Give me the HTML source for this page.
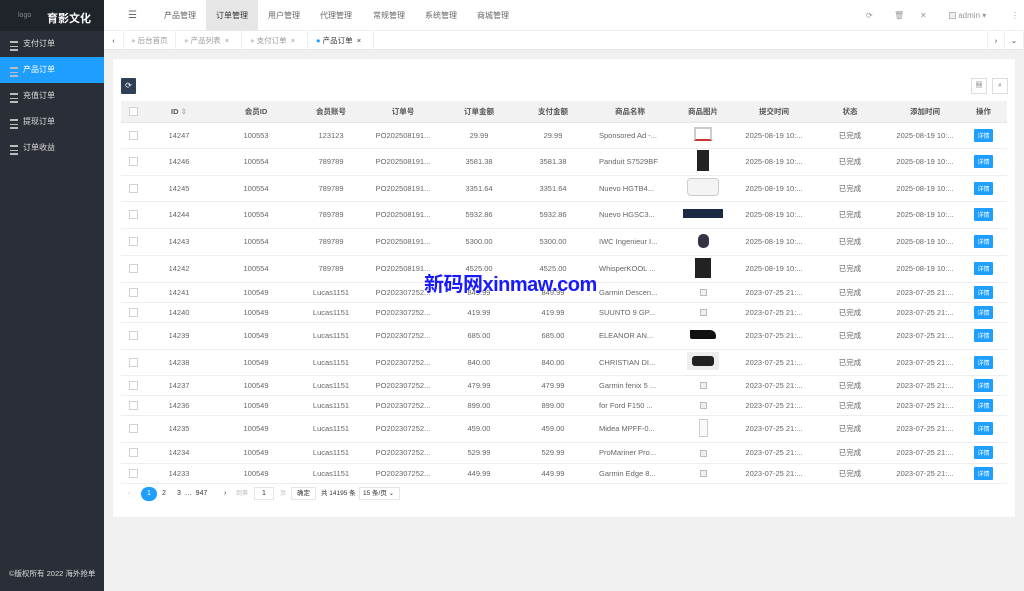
<!DOCTYPE html>
<html><head><meta charset="utf-8"><style>
*{margin:0;padding:0;box-sizing:border-box}
body{width:1024px;height:591px;overflow:hidden;background:#f0f0f0;font-family:"Liberation Sans","Noto Sans CJK SC",sans-serif;font-size:8px;color:#666;position:relative}
.side{position:absolute;left:0;top:0;width:104px;height:591px;background:#2a2f37}
.logo{height:31px;background:#1f242b;color:#fff;font-size:11px;font-weight:bold;padding:10px 0 0 47px;position:relative}
.logo small{position:absolute;left:18px;top:12px;font-size:7px;color:#888;font-weight:normal}
.mi{height:26px;line-height:26px;color:#ddd;padding-left:23px;position:relative;font-size:8px}
.mi:before{content:"";position:absolute;left:10px;top:10px;width:8px;height:6px;border-top:2px solid #bbb;border-bottom:2px solid #bbb;background:linear-gradient(#bbb,#bbb) center/100% 1px no-repeat}
.mi.on{background:#1e9fff;color:#fff}
.copy{position:absolute;bottom:12px;left:9px;color:#ddd;font-size:7.5px}
.top{position:absolute;left:104px;top:0;right:0;height:31px;background:#fff;border-bottom:1px solid #eee}
.nav{position:absolute;top:0;height:31px;line-height:31px;font-size:8px;color:#666}
.tabs{position:absolute;left:104px;top:31px;right:0;height:19px;background:#fff;border-bottom:1px solid #e6e6e6}
.tab{position:absolute;top:0;height:19px;line-height:19px;font-size:7.5px;color:#999;border-right:1px solid #eee}
.card{position:absolute;left:113px;top:59px;width:902px;height:458px;background:#fff}
table{position:absolute;left:121px;top:101px;width:886px;border-collapse:collapse;table-layout:fixed}
th{background:#f2f2f2;height:21px;font-weight:bold;color:#555;font-size:7.5px;border-bottom:1px solid #e6e6e6}
td{text-align:center;border-bottom:1px solid #eee;font-size:7.5px;color:#666;white-space:nowrap;overflow:hidden}
td.l{text-align:left;padding-left:7px}
.cb{display:inline-block;width:9px;height:9px;border:1px solid #d2d2d2;background:#fff;vertical-align:middle}
.btn{display:inline-block;background:#1e9fff;color:#fff;font-size:6px;padding:2px 3px;border-radius:1px}
.bi{display:inline-block;width:7px;height:7px;border:1px solid #bbb;background:#eaf4ea;vertical-align:middle}
.pg{position:absolute;top:487px;font-size:7px;color:#333}
</style></head><body>
<div class="side">
 <div class="logo"><small>logo</small>育影文化</div>
 <div class="mi">支付订单</div>
 <div class="mi on">产品订单</div>
 <div class="mi">充值订单</div>
 <div class="mi">提现订单</div>
 <div class="mi">订单收益</div>
 <div class="copy">©版权所有 2022 海外抢单</div>
</div>
<div class="top">
 <div class="nav" style="left:24px;font-size:10px">☰</div>
 <div class="nav" style="left:60px">产品管理</div>
 <div class="nav" style="left:102px;width:52px;background:#e6e6e6;text-align:center;color:#333">订单管理</div>
 <div class="nav" style="left:164px">用户管理</div>
 <div class="nav" style="left:216px">代理管理</div>
 <div class="nav" style="left:269px">常规管理</div>
 <div class="nav" style="left:321px">系统管理</div>
 <div class="nav" style="left:373px">商城管理</div>
 <div class="nav" style="left:762px;color:#999">⟳</div>
 <div class="nav" style="left:790px;color:#999">🗑</div>
 <div class="nav" style="left:816px;color:#999">✕</div>
 <div class="nav" style="left:845px"><span class="bi"></span> <span style="color:#999">admin ▾</span></div>
 <div class="nav" style="left:907px;color:#999">⋮</div>
</div>
<div class="tabs">
 <div class="tab" style="left:0;width:20px;text-align:center;color:#333">‹</div>
 <div class="tab" style="left:20px;width:52px;padding-left:7px"><span style="color:#ccc">●</span> 后台首页</div>
 <div class="tab" style="left:72px;width:66px;padding-left:8px"><span style="color:#ccc">●</span> 产品列表 &nbsp;×</div>
 <div class="tab" style="left:138px;width:66px;padding-left:8px"><span style="color:#ccc">●</span> 支付订单 &nbsp;×</div>
 <div class="tab" style="left:204px;width:66px;padding-left:8px;color:#333"><span style="color:#1e9fff">●</span> 产品订单 &nbsp;×</div>
 <div class="tab" style="left:883px;width:18px;border-left:1px solid #eee;text-align:center;color:#333">›</div>
 <div class="tab" style="left:901px;width:19px;text-align:center;color:#333">⌄</div>
</div>
<div class="card"></div>
<div style="position:absolute;left:121px;top:78px;width:15px;height:16px;background:#2f4056;color:#fff;font-size:8px;text-align:center;line-height:16px;border-radius:1px">⟳</div>
<div style="position:absolute;left:971px;top:78px;width:16px;height:16px;border:1px solid #ddd;font-size:7px;text-align:center;line-height:14px">▦</div>
<div style="position:absolute;left:992px;top:78px;width:16px;height:16px;border:1px solid #ddd;font-size:7px;text-align:center;line-height:14px">⌕</div>
<table>
<colgroup><col style="width:25px"><col style="width:66px"><col style="width:88px"><col style="width:62px"><col style="width:82px"><col style="width:70px"><col style="width:78px"><col style="width:76px"><col style="width:70px"><col style="width:72px"><col style="width:80px"><col style="width:70px"><col style="width:47px"></colgroup>
<tr><th><span class="cb"></span></th><th>ID <span style="color:#bbb">⇕</span></th><th>会员ID</th><th>会员账号</th><th>订单号</th><th>订单金额</th><th>支付金额</th><th>商品名称</th><th>商品图片</th><th>提交时间</th><th>状态</th><th>添加时间</th><th>操作</th></tr>
<tr style="height:26px"><td><span class="cb"></span></td><td>14247</td><td>100553</td><td>123123</td><td>PO202508191...</td><td>29.99</td><td>29.99</td><td class="l">Sponsored Ad -...</td><td><span style="display:inline-block;width:18px;height:14px;border:2px solid #ccc;border-bottom-color:#c33"></span></td><td>2025-08-19 10:...</td><td>已完成</td><td>2025-08-19 10:...</td><td><span class="btn">详情</span></td></tr>
<tr style="height:27px"><td><span class="cb"></span></td><td>14246</td><td>100554</td><td>789789</td><td>PO202508191...</td><td>3581.38</td><td>3581.38</td><td class="l">Panduit S7529BF</td><td><span style="display:inline-block;width:12px;height:21px;background:#222"></span></td><td>2025-08-19 10:...</td><td>已完成</td><td>2025-08-19 10:...</td><td><span class="btn">详情</span></td></tr>
<tr style="height:26px"><td><span class="cb"></span></td><td>14245</td><td>100554</td><td>789789</td><td>PO202508191...</td><td>3351.64</td><td>3351.64</td><td class="l">Nuevo HGTB4...</td><td><span style="display:inline-block;width:32px;height:18px;border:1px solid #ccc;border-radius:4px;background:#f4f4f4"></span></td><td>2025-08-19 10:...</td><td>已完成</td><td>2025-08-19 10:...</td><td><span class="btn">详情</span></td></tr>
<tr style="height:27px"><td><span class="cb"></span></td><td>14244</td><td>100554</td><td>789789</td><td>PO202508191...</td><td>5932.86</td><td>5932.86</td><td class="l">Nuevo HGSC3...</td><td><span style="display:inline-block;width:40px;height:9px;background:#1a2a44"></span></td><td>2025-08-19 10:...</td><td>已完成</td><td>2025-08-19 10:...</td><td><span class="btn">详情</span></td></tr>
<tr style="height:27px"><td><span class="cb"></span></td><td>14243</td><td>100554</td><td>789789</td><td>PO202508191...</td><td>5300.00</td><td>5300.00</td><td class="l">IWC Ingenieur I...</td><td><span style="display:inline-block;width:11px;height:14px;border-radius:5px;background:#334"></span></td><td>2025-08-19 10:...</td><td>已完成</td><td>2025-08-19 10:...</td><td><span class="btn">详情</span></td></tr>
<tr style="height:27px"><td><span class="cb"></span></td><td>14242</td><td>100554</td><td>789789</td><td>PO202508191...</td><td>4525.00</td><td>4525.00</td><td class="l">WhisperKOOL ...</td><td><span style="display:inline-block;width:16px;height:20px;background:#222"></span></td><td>2025-08-19 10:...</td><td>已完成</td><td>2025-08-19 10:...</td><td><span class="btn">详情</span></td></tr>
<tr style="height:20px"><td><span class="cb"></span></td><td>14241</td><td>100549</td><td>Lucas1151</td><td>PO202307252...</td><td>849.99</td><td>849.99</td><td class="l">Garmin Descen...</td><td><span class="bi"></span></td><td>2023-07-25 21:...</td><td>已完成</td><td>2023-07-25 21:...</td><td><span class="btn">详情</span></td></tr>
<tr style="height:20px"><td><span class="cb"></span></td><td>14240</td><td>100549</td><td>Lucas1151</td><td>PO202307252...</td><td>419.99</td><td>419.99</td><td class="l">SUUNTO 9 GP...</td><td><span class="bi"></span></td><td>2023-07-25 21:...</td><td>已完成</td><td>2023-07-25 21:...</td><td><span class="btn">详情</span></td></tr>
<tr style="height:27px"><td><span class="cb"></span></td><td>14239</td><td>100549</td><td>Lucas1151</td><td>PO202307252...</td><td>685.00</td><td>685.00</td><td class="l">ELEANOR AN...</td><td><span style="display:inline-block;width:26px;height:9px;background:#111;border-radius:0 6px 2px 2px"></span></td><td>2023-07-25 21:...</td><td>已完成</td><td>2023-07-25 21:...</td><td><span class="btn">详情</span></td></tr>
<tr style="height:26px"><td><span class="cb"></span></td><td>14238</td><td>100549</td><td>Lucas1151</td><td>PO202307252...</td><td>840.00</td><td>840.00</td><td class="l">CHRISTIAN DI...</td><td><span style="display:inline-block;width:32px;height:18px;background:#eee;padding:4px 5px"><span style="display:block;height:10px;background:#222;border-radius:3px"></span></span></td><td>2023-07-25 21:...</td><td>已完成</td><td>2023-07-25 21:...</td><td><span class="btn">详情</span></td></tr>
<tr style="height:20px"><td><span class="cb"></span></td><td>14237</td><td>100549</td><td>Lucas1151</td><td>PO202307252...</td><td>479.99</td><td>479.99</td><td class="l">Garmin fenix 5 ...</td><td><span class="bi"></span></td><td>2023-07-25 21:...</td><td>已完成</td><td>2023-07-25 21:...</td><td><span class="btn">详情</span></td></tr>
<tr style="height:20px"><td><span class="cb"></span></td><td>14236</td><td>100549</td><td>Lucas1151</td><td>PO202307252...</td><td>899.00</td><td>899.00</td><td class="l">for Ford F150 ...</td><td><span class="bi"></span></td><td>2023-07-25 21:...</td><td>已完成</td><td>2023-07-25 21:...</td><td><span class="btn">详情</span></td></tr>
<tr style="height:27px"><td><span class="cb"></span></td><td>14235</td><td>100549</td><td>Lucas1151</td><td>PO202307252...</td><td>459.00</td><td>459.00</td><td class="l">Midea MPFF-0...</td><td><span style="display:inline-block;width:9px;height:18px;border:1px solid #ccc;background:#fafafa"></span></td><td>2023-07-25 21:...</td><td>已完成</td><td>2023-07-25 21:...</td><td><span class="btn">详情</span></td></tr>
<tr style="height:21px"><td><span class="cb"></span></td><td>14234</td><td>100549</td><td>Lucas1151</td><td>PO202307252...</td><td>529.99</td><td>529.99</td><td class="l">ProMariner Pro...</td><td><span class="bi"></span></td><td>2023-07-25 21:...</td><td>已完成</td><td>2023-07-25 21:...</td><td><span class="btn">详情</span></td></tr>
<tr style="height:20px"><td><span class="cb"></span></td><td>14233</td><td>100549</td><td>Lucas1151</td><td>PO202307252...</td><td>449.99</td><td>449.99</td><td class="l">Garmin Edge 8...</td><td><span class="bi"></span></td><td>2023-07-25 21:...</td><td>已完成</td><td>2023-07-25 21:...</td><td><span class="btn">详情</span></td></tr>
</table>
<div style="position:absolute;left:424px;top:268px;color:#1a1aff;font-size:20px;font-weight:bold;letter-spacing:-0.5px">新码网xinmaw.com</div>
<div class="pg" style="left:128px;color:#ccc;line-height:14px">‹</div>
<div class="pg" style="left:141px;width:16px;height:14px;border-radius:7px;background:#1e9fff;color:#fff;text-align:center;line-height:14px">1</div>
<div class="pg" style="left:162px;line-height:14px">2</div>
<div class="pg" style="left:177px;line-height:14px">3 &nbsp;… &nbsp;947</div>
<div class="pg" style="left:224px;line-height:14px">›</div>
<div class="pg" style="left:236px;line-height:14px;color:#bbb;font-size:6px">到第</div>
<div class="pg" style="left:254px;width:20px;height:13px;border:1px solid #e6e6e6;text-align:center;line-height:11px">1</div>
<div class="pg" style="left:280px;line-height:14px;color:#bbb;font-size:6px">页</div>
<div class="pg" style="left:291px;width:25px;height:13px;border:1px solid #e6e6e6;text-align:center;line-height:11px;font-size:6.5px">确定</div>
<div class="pg" style="left:321px;line-height:14px;font-size:6.5px">共 14195 条</div>
<div class="pg" style="left:359px;width:41px;height:13px;border:1px solid #e6e6e6;line-height:11px;padding-left:3px;font-size:6.5px">15 条/页 ⌄</div>
</body></html>
